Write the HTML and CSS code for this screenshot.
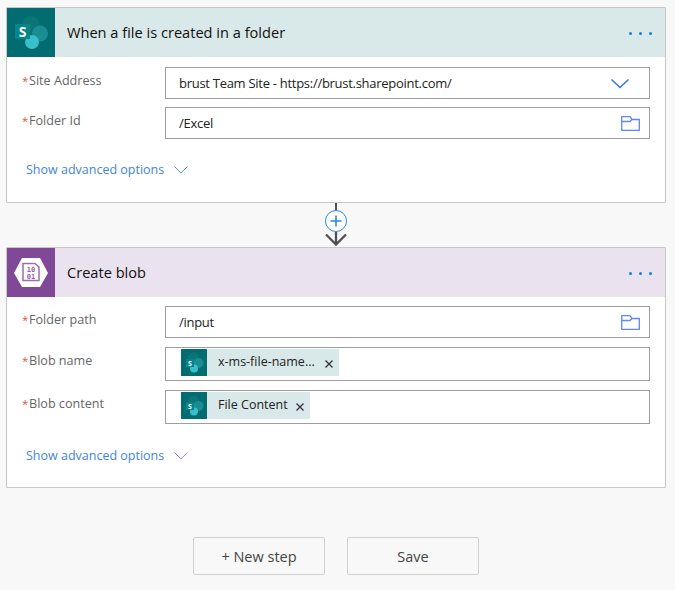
FILE: index.html
```html
<!DOCTYPE html>
<html>
<head>
  <title>Flow designer</title>
  <link rel="stylesheet" href="styles.css">
</head>
<body>
  <div class="card">
    <div class="card-header sp-header">
      <div class="card-icon sp-icon">
        <svg width="48" height="49" viewBox="0 0 48 49">
          <circle cx="24" cy="16.5" r="8.5" fill="#0b7476"/>
          <circle cx="33" cy="25.5" r="8" fill="#1a8d92"/>
          <circle cx="25" cy="34" r="7" fill="#37c0ca"/>
          <rect x="8" y="16" width="15" height="15" rx="1" fill="#058589"/>
          <text x="15.5" y="28.5" class="sp-letter">S</text>
        </svg>
      </div>
      <div class="card-title">When a file is created in a folder</div>
      <div class="dots"><span></span><span></span><span></span></div>
    </div>
    <div class="card-body">
      <div class="field">
        <label class="field-label"><span class="req">*</span>Site Address</label>
        <div class="input">
          <span class="input-text">brust Team Site - https://brust.sharepoint.com/</span>
          <svg class="select-arrow" width="20" height="11" viewBox="0 0 20 11"><path d="M1.5 1.5 L10 9.5 L18.5 1.5" fill="none" stroke="#2f74f0" stroke-width="1.5"/></svg>
        </div>
      </div>
      <div class="field">
        <label class="field-label"><span class="req">*</span>Folder Id</label>
        <div class="input">
          <span class="input-text">/Excel</span>
          <svg class="folder" width="19" height="15" viewBox="0 0 19 15"><path d="M.7.7H9L11 3.5H18.3V14.3H.7ZM.7 5.5H9L11 3.5" fill="none" stroke="#5f86ff" stroke-width="1.3"/></svg>
        </div>
      </div>
      <div class="advanced">
        Show advanced options
        <svg width="14" height="8" viewBox="0 0 14 8"><path d="M.5.5 L7 7 L13.5.5" fill="none" stroke="#5b9be0" stroke-width="1"/></svg>
      </div>
    </div>
  </div>

  <div class="connector">
    <div class="line"></div>
    <div class="add">
      <svg width="12" height="12" viewBox="0 0 12 12"><path d="M6 .5V11.5M.5 6H11.5" stroke="#2b88d8" stroke-width="1.6"/></svg>
    </div>
    <svg class="arrow" width="22" height="14" viewBox="0 0 22 14"><path d="M11 0V12M1 2.5 L11 12.5 L21 2.5" fill="none" stroke="#505050" stroke-width="2.3"/></svg>
  </div>

  <div class="card card-blob">
    <div class="card-header blob-header">
      <div class="card-icon blob-icon">
        <svg width="48" height="49" viewBox="0 0 48 49">
          <path d="M15 10H33L41 25L33 39H15L7 25Z" fill="#fff"/>
          <path d="M16 15.5H28L32 19V32.5H16Z" fill="none" stroke="#9a6fb0" stroke-width="1.5"/>
          <text x="24" y="23.5" class="blob-bits">10</text>
          <text x="24" y="30.5" class="blob-bits">01</text>
        </svg>
      </div>
      <div class="card-title">Create blob</div>
      <div class="dots"><span></span><span></span><span></span></div>
    </div>
    <div class="card-body">
      <div class="field">
        <label class="field-label"><span class="req">*</span>Folder path</label>
        <div class="input">
          <span class="input-text">/input</span>
          <svg class="folder" width="19" height="15" viewBox="0 0 19 15"><path d="M.7.7H9L11 3.5H18.3V14.3H.7ZM.7 5.5H9L11 3.5" fill="none" stroke="#5f86ff" stroke-width="1.3"/></svg>
        </div>
      </div>
      <div class="field field-token">
        <label class="field-label"><span class="req">*</span>Blob name</label>
        <div class="input input-token">
          <div class="token token-name">
            <div class="token-icon">
              <svg width="26" height="27" viewBox="0 0 26 27">
                <circle cx="12.5" cy="9" r="5.5" fill="#0b7476"/>
                <circle cx="17.5" cy="14" r="5" fill="#1a8d92"/>
                <circle cx="13" cy="19.5" r="4" fill="#37c0ca"/>
                <rect x="5" y="10" width="8" height="8" fill="#058589"/>
                <text x="9" y="16.5" class="token-letter">S</text>
              </svg>
            </div>
            <span class="token-text">x-ms-file-name...</span>
            <svg class="token-close" width="8" height="8" viewBox="0 0 8 8"><path d="M.5.5L7.5 7.5M7.5.5L.5 7.5" stroke="#333" stroke-width="1.3"/></svg>
          </div>
        </div>
      </div>
      <div class="field field-token">
        <label class="field-label"><span class="req">*</span>Blob content</label>
        <div class="input input-token">
          <div class="token">
            <div class="token-icon">
              <svg width="26" height="27" viewBox="0 0 26 27">
                <circle cx="12.5" cy="9" r="5.5" fill="#0b7476"/>
                <circle cx="17.5" cy="14" r="5" fill="#1a8d92"/>
                <circle cx="13" cy="19.5" r="4" fill="#37c0ca"/>
                <rect x="5" y="10" width="8" height="8" fill="#058589"/>
                <text x="9" y="16.5" class="token-letter">S</text>
              </svg>
            </div>
            <span class="token-text">File Content</span>
            <svg class="token-close" width="8" height="8" viewBox="0 0 8 8"><path d="M.5.5L7.5 7.5M7.5.5L.5 7.5" stroke="#333" stroke-width="1.3"/></svg>
          </div>
        </div>
      </div>
      <div class="advanced">
        Show advanced options
        <svg width="14" height="8" viewBox="0 0 14 8"><path d="M.5.5 L7 7 L13.5.5" fill="none" stroke="#a98fd6" stroke-width="1"/></svg>
      </div>
    </div>
  </div>

  <div class="buttons">
    <button>+ New step</button>
    <button>Save</button>
  </div>
</body>
</html>
```

FILE: styles.css
```css
body {
  margin: 0;
  padding: 7px 9px 0 6px;
  background-color: #f8f8f8;
  font-family: "Open Sans", Arial, sans-serif;
  font-size: 13px;
  color: #222;
}
.card {
  height: 196px;
  box-sizing: border-box;
  background-color: #fff;
  border: 1px solid #c8c8c8;
  border-radius: 1px;
}
.card-blob {
  height: 241px;
}
.card-header {
  display: flex;
  align-items: center;
  height: 49px;
}
.sp-header {
  background-color: #d9e8e8;
}
.blob-header {
  background-color: #ebe2f0;
}
.card-icon {
  width: 48px;
  height: 49px;
  flex: none;
}
.card-icon svg {
  display: block;
}
.sp-icon {
  background-color: #036c70;
}
.blob-icon {
  background-color: #804998;
}
.sp-letter {
  font-family: "Open Sans", Arial, sans-serif;
  font-size: 14px;
  font-weight: 700;
  fill: #fff;
  text-anchor: middle;
}
.blob-bits {
  font-family: "DejaVu Sans Mono", monospace;
  font-size: 7px;
  font-weight: 700;
  fill: #8f62a6;
  text-anchor: middle;
}
.card-title {
  flex: 1;
  margin: 0 0 1px 12px;
  font-size: 14.6px;
  color: #111;
}
.dots {
  display: flex;
  gap: 7px;
  margin: 2px 13px 0 0;
}
.dots span {
  width: 3px;
  height: 3px;
  border-radius: 50%;
  background-color: #0f7fe0;
}
.card-body {
  padding: 10px 15px 0 15px;
}
.card-blob .card-body {
  padding-top: 9px;
}
.card-blob .field:first-child {
  margin-bottom: 9px;
}
.field {
  display: flex;
  height: 32px;
  margin-bottom: 8px;
}
.field-label {
  width: 143px;
  flex: none;
  padding-top: 5px;
  font-size: 12.6px;
  color: #666;
}
.req {
  display: inline-block;
  width: 7px;
  font-size: 11.5px;
  color: #e0553f;
}
.input {
  flex: 1;
  display: flex;
  align-items: center;
  justify-content: space-between;
  box-sizing: border-box;
  padding: 0 9px 0 13px;
  border: 1px solid #9e9e9e;
  font-size: 13px;
  color: #222;
}
.input-text {
  letter-spacing: -0.28px;
}
.select-arrow {
  margin-right: 10px;
}
.field-token {
  height: 34px;
  margin-bottom: 9px;
}
.input-token {
  justify-content: flex-start;
  padding: 1px 0 0 15px;
  align-items: flex-start;
}
.token {
  display: flex;
  align-items: center;
  height: 27px;
  background-color: #d9e8e8;
}
.token-name {
  width: 158px;
}
.token-name .token-close {
  margin-left: 10px;
}
.token-icon {
  width: 26px;
  height: 27px;
  background-color: #036c70;
}
.token-icon svg {
  display: block;
}
.token-letter {
  font-family: "Open Sans", Arial, sans-serif;
  font-size: 7px;
  font-weight: 700;
  fill: #fff;
  text-anchor: middle;
}
.token-text {
  margin: 0 0 2px 11px;
  font-size: 12.5px;
  color: #222;
  white-space: nowrap;
}
.token-close {
  margin: 3px 6px 0 8px;
}
.advanced {
  display: flex;
  align-items: center;
  gap: 10px;
  margin: 23px 0 0 4px;
  font-size: 12.5px;
  color: #3f86d8;
}
.card:first-child .advanced {
  margin-top: 22px;
}
.connector {
  display: flex;
  flex-direction: column;
  align-items: center;
  height: 44px;
}
.line {
  width: 2px;
  height: 7px;
  background-color: #505050;
}
.add {
  display: flex;
  align-items: center;
  justify-content: center;
  box-sizing: border-box;
  width: 22px;
  height: 22px;
  border: 1px solid #2b88d8;
  border-radius: 50%;
  background-color: #fff;
}
.arrow {
  display: block;
}
.buttons {
  display: flex;
  justify-content: center;
  gap: 22px;
  margin-top: 49px;
}
button {
  width: 132px;
  height: 38px;
  background-color: #f8f8f8;
  border: 1px solid #cfcfcf;
  border-radius: 2px;
  font-family: "Open Sans", Arial, sans-serif;
  font-size: 14.5px;
  color: #444;
  cursor: pointer;
}
```
